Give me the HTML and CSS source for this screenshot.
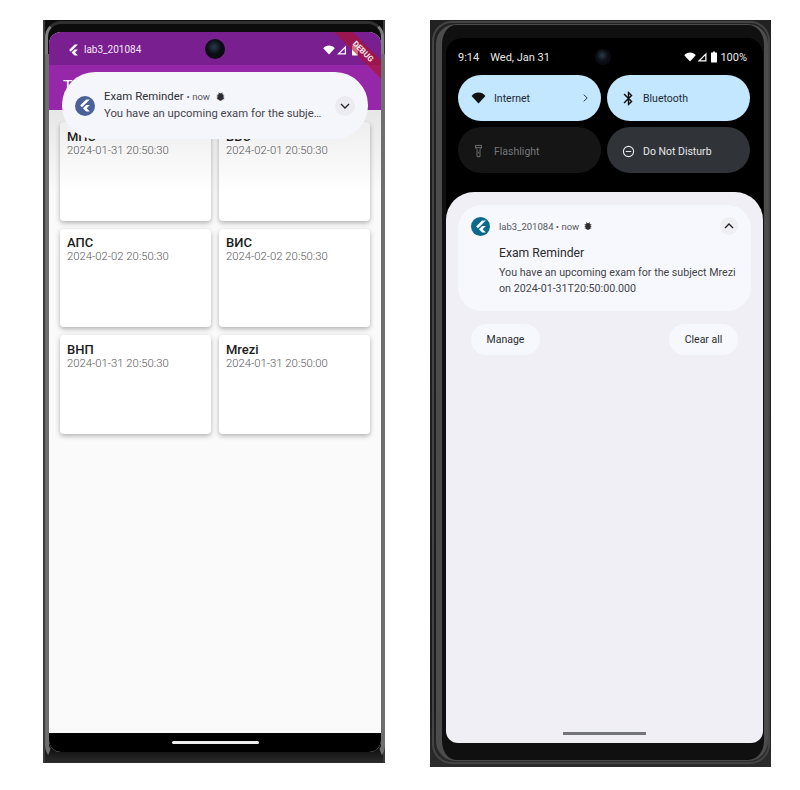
FILE: index.html
```html
<!DOCTYPE html>
<html lang="en">
<head>
  <meta charset="UTF-8">
  <title>Exam Reminder</title>
  <link rel="stylesheet" href="styles.css">
</head>
<body>
  <svg class="defs" width="0" height="0">
    <symbol id="flutter" viewBox="0 0 24 24"><path d="M14.314 0L2.3 12 6 15.7 21.684.012h-7.357l.003-.012zm.014 11.072L7.857 17.53l6.47 6.47H21.7l-6.46-6.468 6.46-6.46h-7.37z"/></symbol>
    <symbol id="wifi" viewBox="0 0 24 20"><path d="M12 19L.5 6.5C3.500 3 7.500 1 12 1s8.500 2 11.500 5.500z"/></symbol>
    <symbol id="signal" viewBox="0 0 20 20"><path d="M19 1v18H1zM16.500 7L7 16.500h9.500z" fill-rule="evenodd"/></symbol>
    <symbol id="battery" viewBox="0 0 10 18"><path d="M3.500 0h3v1.500H9a1 1 0 0 1 1 1V17a1 1 0 0 1-1 1H1a1 1 0 0 1-1-1V2.500a1 1 0 0 1 1-1h2.500z"/></symbol>
    <symbol id="bug" viewBox="0 0 24 24"><path d="M20 8h-2.810c-.45-.78-1.070-1.450-1.820-1.960L17 4.410 15.590 3l-2.170 2.170C12.960 5.060 12.490 5 12 5s-.96.06-1.410.17L8.410 3 7 4.410l1.620 1.630C7.880 6.550 7.260 7.220 6.810 8H4v2h2.090c-.05.33-.09.66-.09 1v1H4v2h2v1c0 .34.04.67.09 1H4v2h2.810c1.040 1.790 2.970 3 5.190 3s4.150-1.210 5.190-3H20v-2h-2.090c.05-.33.09-.66.09-1v-1h2v-2h-2v-1c0-.34-.04-.67-.09-1H20V8z"/></symbol>
    <symbol id="bluetooth" viewBox="0 0 24 24"><path d="M17.710 7.710L12 2h-1v7.590L6.410 5 5 6.410 10.590 12 5 17.590 6.410 19 11 14.410V22h1l5.710-5.710-4.300-4.290 4.300-4.290zM13 5.830l1.880 1.880L13 9.590V5.830zm1.880 10.460L13 18.170v-3.760l1.880 1.880z"/></symbol>
  </svg>

  <div class="phone phone-app">
    <div class="screen screen-app">
      <div class="app-status">
        <svg class="ic-flutter"><use href="#flutter"/></svg>
        <span>lab3_201084</span>
        <div class="status-icons">
          <svg class="ic-wifi"><use href="#wifi"/></svg>
          <svg class="ic-signal"><use href="#signal"/></svg>
          <svg class="ic-battery"><use href="#battery"/></svg>
        </div>
      </div>
      <div class="appbar">T</div>
      <div class="grid">
        <div class="card"><b>МПС</b><span>2024-01-31 20:50:30</span></div>
        <div class="card"><b>ВБС</b><span>2024-02-01 20:50:30</span></div>
        <div class="card"><b>АПС</b><span>2024-02-02 20:50:30</span></div>
        <div class="card"><b>ВИС</b><span>2024-02-02 20:50:30</span></div>
        <div class="card"><b>ВНП</b><span>2024-01-31 20:50:30</span></div>
        <div class="card"><b>Mrezi</b><span>2024-01-31 20:50:00</span></div>
      </div>
      <div class="scrim"></div>
      <div class="navbar"><i></i></div>

      <div class="debug">DEBUG</div>
      <div class="heads-up">
        <div class="app-icon"><svg><use href="#flutter"/></svg></div>
        <div class="heads-text">
          <div class="heads-title">Exam Reminder <small>• now</small> <svg class="ic-bug"><use href="#bug"/></svg></div>
          <div class="heads-body">You have an upcoming exam for the subje…</div>
        </div>
        <div class="chevron"><svg viewBox="0 0 12 12"><path d="M2 4l4 4 4-4"/></svg></div>
      </div>
    </div>
    <div class="camera camera-app"></div>
  </div>

  <div class="phone phone-shade">
    <div class="screen screen-shade">
      <div class="shade-status">
        <span class="time">9:14</span>
        <span>Wed, Jan 31</span>
        <div class="status-icons">
          <svg class="ic-wifi"><use href="#wifi"/></svg>
          <svg class="ic-signal"><use href="#signal"/></svg>
          <svg class="ic-battery"><use href="#battery"/></svg>
          <span class="percent">100%</span>
        </div>
      </div>
      <div class="tiles">
        <div class="tile tile-on">
          <svg class="ic-wifi-big"><use href="#wifi"/></svg>
          <span>Internet</span>
          <svg class="tile-arrow" viewBox="0 0 8 12"><path d="M2 2l4 4-4 4"/></svg>
        </div>
        <div class="tile tile-on">
          <svg class="ic-bt"><use href="#bluetooth"/></svg>
          <span>Bluetooth</span>
        </div>
        <div class="tile tile-off">
          <svg class="ic-torch" viewBox="0 0 12 18"><path d="M2 1.500h8v3l-2 2.500v9.500H4V7L2 4.500zM2 4.500h8M6 10v2"/></svg>
          <span>Flashlight</span>
        </div>
        <div class="tile tile-dnd">
          <svg class="ic-dnd" viewBox="0 0 14 14"><circle cx="7" cy="7" r="5.500"/><path d="M4 7h6"/></svg>
          <span>Do Not Disturb</span>
        </div>
      </div>
      <div class="panel">
        <div class="notif">
          <div class="notif-head">
            <div class="app-icon app-icon-teal"><svg><use href="#flutter"/></svg></div>
            <span>lab3_201084 • now</span>
            <svg class="ic-bug"><use href="#bug"/></svg>
            <div class="chevron chevron-up"><svg viewBox="0 0 12 12"><path d="M2 8l4-4 4 4"/></svg></div>
          </div>
          <div class="notif-title">Exam Reminder</div>
          <div class="notif-body">You have an upcoming exam for the subject Mrezi<br>on 2024-01-31T20:50:00.000</div>
        </div>
        <div class="actions">
          <button>Manage</button>
          <button>Clear all</button>
        </div>
        <div class="handle"></div>
      </div>
    </div>
    <div class="camera camera-shade"></div>
  </div>
</body>
</html>
```

FILE: styles.css
```css
* {
  box-sizing: border-box;
}

body {
  margin: 0;
  padding: 20px 0 0 43px;
  background: #fff;
  display: flex;
  align-items: flex-start;
  gap: 45px;
  font-family: Roboto, "Noto Sans", sans-serif;
}

.defs {
  position: absolute;
}

svg {
  display: block;
  fill: currentColor;
}

.phone {
  position: relative;
  flex: none;
}

.phone::before,
.phone::after {
  content: "";
  position: absolute;
  z-index: 0;
}

.phone-app {
  width: 342px;
  height: 743px;
  padding: 12px 4px 11px 6px;
  background: linear-gradient(#0c0c0c 0, #000 97%, #2c2c2c 100%);
  box-shadow: inset 2px 0 0 #3a3a3a, inset -2px 0 0 #3a3a3a;
}

/* top arc of the case */
.phone-app::before {
  left: 2px;
  right: 1px;
  top: 1px;
  height: 34px;
  border: 3px solid #7d7d7d;
  border-bottom: none;
  border-top-color: #303030;
  border-radius: 16px 16px 0 0;
}

/* sides and bottom corners of the case */
.phone-app::after {
  left: 2px;
  right: 0;
  top: 34px;
  bottom: 0;
  border-left: 4px solid #6e6e6e;
  border-right: 4px solid #6e6e6e;
  border-bottom: 10px solid transparent;
  border-radius: 0 0 18px 18px;
}

.phone-shade {
  width: 341px;
  height: 747px;
  padding: 18px 8px 24px 16px;
  background: linear-gradient(#222 0, #1c1c1c 92%, #2c2c2c 100%);
}

.phone-shade::before {
  left: 2px;
  right: 1px;
  top: 1px;
  bottom: 3px;
  border: 2px solid #444;
  border-radius: 20px;
}

.phone-shade::after {
  left: 6px;
  right: 3px;
  top: 4px;
  bottom: 6px;
  border-style: solid;
  border-color: #4c4c4c;
  border-width: 1px 4px 1px 6px;
  background: #101010;
  border-radius: 20px;
}

.screen {
  position: relative;
  z-index: 1;
  height: 100%;
  display: flex;
  flex-direction: column;
  overflow: hidden;
}

.camera {
  position: absolute;
  z-index: 2;
  border-radius: 50%;
  background: radial-gradient(circle at 45% 40%, #2a3a48 0, #0a0d14 45%, #06080c 100%);
}

.camera-app {
  left: 162px;
  top: 19px;
  width: 20px;
  height: 20px;
}

.camera-shade {
  left: 165px;
  top: 29px;
  width: 16px;
  height: 16px;
}

.status-icons {
  margin-left: auto;
  display: flex;
  align-items: center;
}

/* left phone */
.screen-app {
  background: #fafafa;
  border-radius: 12px;
}

.app-status {
  height: 33px;
  flex: none;
  background: #7a1f8f;
  color: #f3e6f6;
  display: flex;
  align-items: center;
  padding: 2px 23px 0 19px;
  font-size: 10px;
}

.ic-flutter {
  width: 11px;
  height: 12px;
  color: #fff;
  margin-right: 5px;
}

.ic-wifi {
  width: 12px;
  height: 10px;
  color: #fff;
}

.ic-signal {
  width: 10px;
  height: 10px;
  color: #fff;
  margin-left: 1px;
}

.ic-battery {
  width: 6px;
  height: 12px;
  color: #fff;
  margin-left: 4px;
}

.app-status .ic-signal {
  width: 11px;
}

.app-status .ic-battery {
  margin-left: 5px;
}

.appbar {
  height: 45px;
  flex: none;
  background: #9527a8;
  color: #fff;
  font-size: 16px;
  padding: 12px 0 0 14px;
}

.grid {
  flex: 1;
  display: grid;
  grid-template-columns: 151px 151px;
  grid-auto-rows: 98.500px;
  gap: 8px;
  padding: 12px 11px 0;
}

.card {
  background: #fff;
  border-radius: 4px;
  box-shadow: 0 2px 5px rgba(0, 0, 0, 0.3);
  padding: 6.500px 7px;
  display: flex;
  flex-direction: column;
}

.card b {
  font-size: 13px;
  font-weight: 500;
  line-height: 15px;
  color: #1c1c1c;
}

.card span {
  font-size: 11.300px;
  font-weight: 300;
  line-height: 14px;
  color: #5a5a5a;
}

.scrim {
  position: absolute;
  left: 0;
  right: 0;
  top: 78px;
  height: 84px;
  background: linear-gradient(rgba(0, 0, 0, 0.08), rgba(0, 0, 0, 0));
}

.navbar {
  height: 19px;
  flex: none;
  background: #000;
  display: flex;
  justify-content: center;
  padding-top: 8px;
}

.navbar i {
  width: 87px;
  height: 3px;
  border-radius: 2px;
  background: #eee;
}

.debug {
  position: absolute;
  top: 13px;
  right: -22px;
  width: 80px;
  height: 13px;
  background: rgba(176, 18, 40, 0.62);
  color: #f6e4ea;
  font-size: 8px;
  font-weight: 700;
  line-height: 13px;
  text-align: center;
  transform: rotate(45deg);
}

.heads-up {
  position: absolute;
  left: 13px;
  top: 40px;
  width: 306px;
  height: 67px;
  border-radius: 33px;
  background: #f5f5fc;
  display: flex;
  align-items: center;
  padding: 0 13px;
  color: #303136;
}

.app-icon {
  flex: none;
  width: 20px;
  height: 20px;
  border-radius: 50%;
  background: #4a6098;
  color: #fff;
  display: flex;
  align-items: center;
  justify-content: center;
}

.app-icon svg {
  width: 12px;
  height: 13px;
}

.heads-text {
  flex: 1;
  padding: 0 0 2px 9px;
}

.heads-title {
  display: flex;
  align-items: center;
  gap: 3px;
  font-size: 11.400px;
  line-height: 17px;
}

.heads-title small {
  font-size: 9.500px;
  color: #55565c;
}

.ic-bug {
  width: 11px;
  height: 11px;
  color: #2c2c30;
  margin-left: 2px;
}

.heads-body {
  font-size: 11.300px;
  line-height: 17px;
  color: #44454a;
}

.chevron {
  flex: none;
  width: 20px;
  height: 20px;
  border-radius: 50%;
  background: #ebebf1;
  display: flex;
  align-items: center;
  justify-content: center;
}

.chevron svg {
  width: 12px;
  height: 12px;
  fill: none;
  stroke: #222;
  stroke-width: 1.300;
}

/* right phone */
.screen-shade {
  background: #000;
  border-radius: 16px 16px 12px 12px;
}

.shade-status {
  height: 37px;
  flex: none;
  display: flex;
  align-items: center;
  padding: 1px 16px 0 12px;
  color: #e8e8e8;
  font-size: 11px;
}

.shade-status .time {
  margin-right: 11px;
}

.percent {
  margin-left: 3px;
}

.tiles {
  flex: none;
  display: grid;
  grid-template-columns: 143px 143px;
  grid-auto-rows: 46px;
  gap: 6px;
  padding: 0 13px 0 12px;
}

.tile {
  display: flex;
  align-items: center;
  border-radius: 23px;
  font-size: 10.500px;
  padding: 0 14px;
}

.tile-on {
  background: #c2e7ff;
  color: #1d2933;
}

.tile-off {
  background: #151515;
  color: #74777a;
  padding-top: 2px;
}

.tile-dnd {
  background: #303438;
  color: #e4e6e8;
  padding-top: 2px;
}

.ic-wifi-big {
  width: 15px;
  height: 12px;
  margin: 0 8px 0 -1px;
  color: #111;
}

.tile-arrow {
  width: 7px;
  height: 10px;
  margin-left: auto;
  margin-right: -2px;
  fill: none;
  stroke: #333;
  stroke-width: 1.200;
}

.ic-bt {
  width: 17px;
  height: 17px;
  margin: 0 6px 0 -1px;
  color: #111;
}

.ic-torch {
  width: 9px;
  height: 14px;
  margin: 0 11px 0 2px;
  fill: none;
  stroke: #74777a;
  stroke-width: 1.200;
}

.ic-dnd {
  width: 13px;
  height: 13px;
  margin: 0 8px 0 1px;
  fill: none;
  stroke: #e4e6e8;
  stroke-width: 1.200;
}

.panel {
  flex: 1;
  margin-top: 19px;
  background: #efeff5;
  border-radius: 28px 28px 0 0;
  padding: 13px 12px 0;
  display: flex;
  flex-direction: column;
  color: #2a2b2f;
}

.notif {
  height: 106px;
  flex: none;
  background: #f7f8fd;
  border-radius: 24px;
  padding: 12px 13px 0 13px;
}

.notif-head {
  display: flex;
  align-items: center;
  height: 18px;
  font-size: 9.500px;
  color: #55565c;
}

.notif-head .app-icon {
  width: 19px;
  height: 19px;
  margin-right: 9px;
}

.notif-head .ic-bug {
  width: 10px;
  height: 10px;
  margin-left: 4px;
}

.app-icon-teal {
  background: #0b6a8c;
}

.chevron-up {
  width: 18px;
  height: 18px;
  margin-left: auto;
  background: #eeeef3;
}

.notif-title {
  font-size: 12.200px;
  line-height: 16px;
  margin: 10px 0 0 28px;
}

.notif-body {
  font-size: 10.700px;
  line-height: 16px;
  margin: 4px 0 0 28px;
  color: #44454a;
}

.actions {
  display: flex;
  justify-content: space-between;
  padding: 13px 13px 0;
}

.actions button {
  height: 31px;
  width: 69px;
  border: none;
  border-radius: 16px;
  background: #f7f8fd;
  color: #2a2b2f;
  font-family: inherit;
  font-size: 10.500px;
  padding: 0;
}

.handle {
  width: 83px;
  height: 3px;
  margin: auto auto 8px;
  background: #74747c;
}
```
